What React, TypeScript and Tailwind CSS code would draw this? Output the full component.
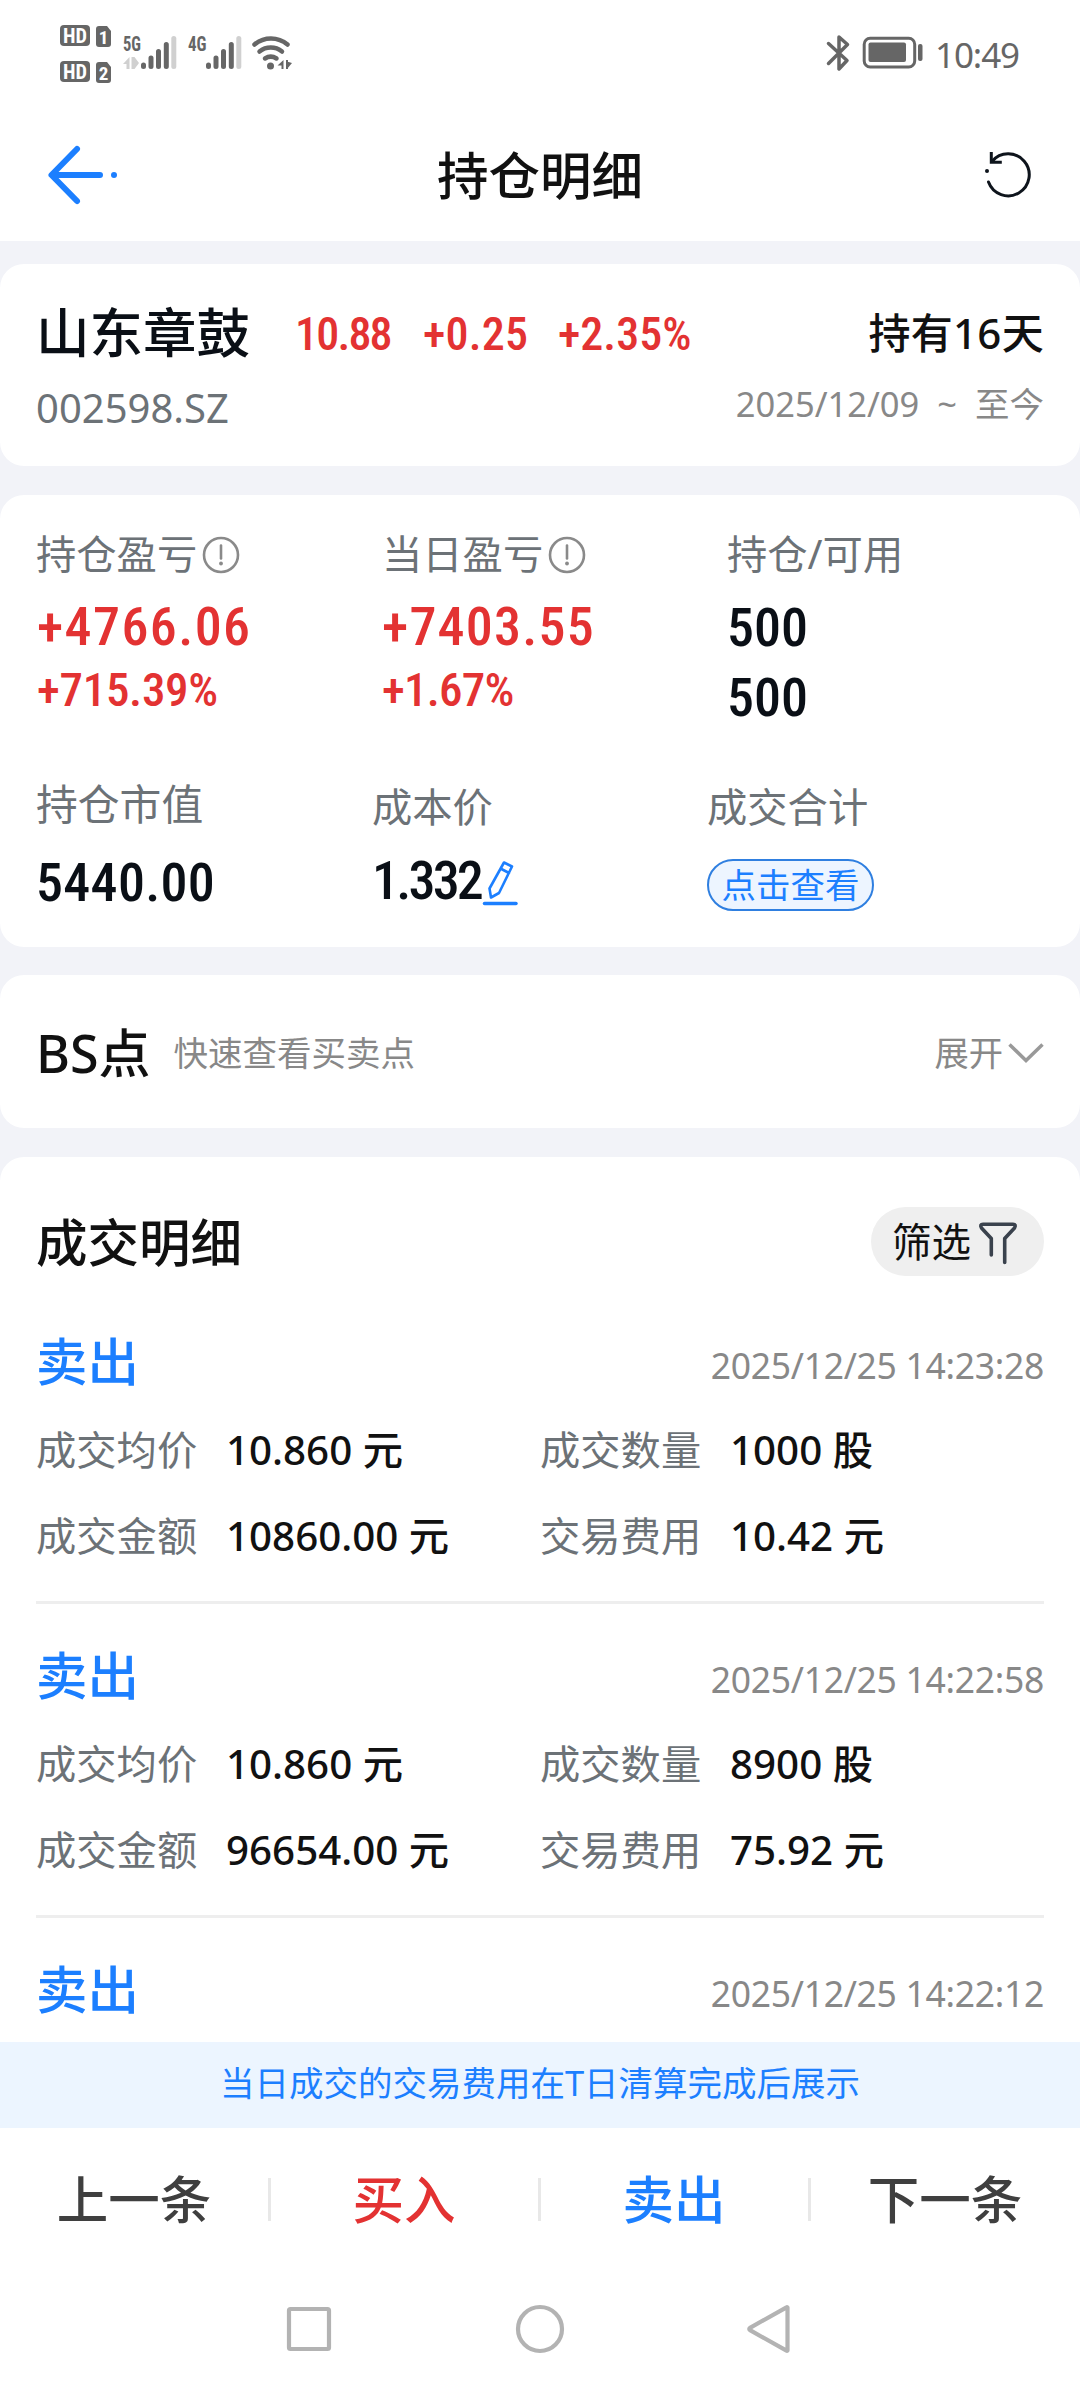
import type { ReactNode } from "react";

const trades = [
  {
    time: "2025/12/25 14:23:28",
    fields: [
      { label: "成交均价", value: "10.860 元" },
      { label: "成交数量", value: "1000 股" },
      { label: "成交金额", value: "10860.00 元" },
      { label: "交易费用", value: "10.42 元" },
    ],
  },
  {
    time: "2025/12/25 14:22:58",
    fields: [
      { label: "成交均价", value: "10.860 元" },
      { label: "成交数量", value: "8900 股" },
      { label: "成交金额", value: "96654.00 元" },
      { label: "交易费用", value: "75.92 元" },
    ],
  },
  { time: "2025/12/25 14:22:12", fields: [] },
];

const actions = [
  { label: "上一条", color: "text-[#3f3f3f]" },
  { label: "买入", color: "text-[#e33232]" },
  { label: "卖出", color: "text-[#1c7fff]" },
  { label: "下一条", color: "text-[#3f3f3f]" },
];

const din = "font-['Roboto_Condensed',Roboto,sans-serif] font-medium";

function StatusBar() {
  return (
    <div className="flex h-[110px] items-start justify-between pl-[60px] pr-[61px]">
      {/* sim cards, signal and wifi */}
      <svg className="mt-[20px]" width="234" height="70" viewBox="60 20 234 70" fill="#666">
        <rect x="60" y="25" width="30" height="21" rx="4" />
        <rect x="60" y="61" width="30" height="21" rx="4" />
        <path d="M99 26h8l4 5v13a3 3 0 0 1-3 3h-9a3 3 0 0 1-3-3V29a3 3 0 0 1 3-3z" />
        <path d="M99 62h8l4 5v13a3 3 0 0 1-3 3h-9a3 3 0 0 1-3-3V65a3 3 0 0 1 3-3z" />
        <g className="font-['Roboto_Condensed',Roboto,sans-serif] font-bold">
          <text x="75" y="43" fontSize="20.5" textAnchor="middle" fill="#fff" textLength="24" lengthAdjust="spacingAndGlyphs">HD</text>
          <text x="75" y="79" fontSize="20.5" textAnchor="middle" fill="#fff" textLength="24" lengthAdjust="spacingAndGlyphs">HD</text>
          <text x="103.5" y="43.5" fontSize="19" textAnchor="middle" fill="#fff">1</text>
          <text x="103.5" y="79.5" fontSize="19" textAnchor="middle" fill="#fff">2</text>
          <text x="123" y="51" fontSize="20.5" textLength="18" lengthAdjust="spacingAndGlyphs">5G</text>
          <text x="188" y="51" fontSize="20.5" textLength="18.5" lengthAdjust="spacingAndGlyphs">4G</text>
        </g>
        <path fill="#d0d0d0" d="M129.500 57v12h-3v-5h-3.500zM131.500 57h3v12h-3zM134.500 57v12l4.500-6z" />
        {[0, 65].map((dx) => (
          <g key={dx} stroke="#666" strokeWidth="5" strokeLinecap="round">
            <path d={`M${143.5 + dx} 65v1.500M${151 + dx} 58v8.500M${158.5 + dx} 51.500v15M${166.3 + dx} 44.500v22`} />
            <path stroke="#d0d0d0" d={`M${173.8 + dx} 38.500v28`} />
          </g>
        ))}
        <g fill="none" stroke="#666" strokeWidth="4.500" strokeLinecap="round">
          <path d="M254.500 44.500a25.500 25.500 0 0 1 33 0" />
          <path d="M259.500 51.500a18 18 0 0 1 22.500 0" />
          <path d="M265 58.500a10.500 10.500 0 0 1 11.500 0" />
        </g>
        <circle cx="270.500" cy="66" r="3.500" />
        <path d="M283.500 60v9h-2v-3.500h-4zM286 60v9h2v-9zM287 61.500v7.500l5-6z" />
      </svg>

      <div className="mt-[32px] flex h-[42px] items-center">
        <svg width="24" height="38" viewBox="826 34 24 38" fill="none" stroke="#666" strokeWidth="3.500" strokeLinejoin="round" strokeLinecap="round">
          <path d="M828.500 43.500 847 60.500l-8 8.500V37l8.500 7.500-19 19" />
        </svg>
        <svg className="ml-[12px]" width="62" height="34" viewBox="862 37 62 34">
          <rect x="864.200" y="39.200" width="50.500" height="28.800" rx="6" fill="none" stroke="#666" strokeWidth="3" />
          <rect x="868.500" y="43.500" width="37.500" height="19.500" rx="2" fill="#666" />
          <rect x="918" y="45" width="4.500" height="17" rx="2" fill="#666" />
        </svg>
        <span className="ml-[11px] mt-[2px] whitespace-nowrap text-[35px] leading-none tracking-[-1.1px] text-[#666]">10:49</span>
      </div>
    </div>
  );
}

function Header() {
  return (
    <header className="flex h-[131px] items-center justify-between px-[46px] pb-[2px]">
      <svg width="74" height="64" viewBox="46 143 74 64" fill="none" stroke="#1c7fff" strokeWidth="6" strokeLinecap="round" strokeLinejoin="round">
        <path d="M77 149 51.500 175 77 201M52 175h48" />
        <circle cx="114" cy="175" r="3" fill="#1c7fff" stroke="none" />
      </svg>
      <h1 className="pt-[2px] text-[51.5px] font-medium leading-none text-[#111]">持仓明细</h1>
      <svg className="ml-[24px]" width="50" height="50" viewBox="986 149 50 50" fill="none" stroke="#0e141c" strokeWidth="3" strokeLinecap="round">
        <path d="M990.500 181a21 21 0 1 0 3.500-20.500" />
        <path d="M993.300 152.500v8.700h9" strokeLinecap="square" />
        <circle cx="989" cy="170" r="2" fill="#0e141c" stroke="none" />
      </svg>
    </header>
  );
}

function InfoIcon() {
  return (
    <svg className="ml-[5px] mt-[2px]" width="38" height="38" viewBox="0 0 38 38" fill="none" stroke="#8a8a8a" strokeWidth="2.600">
      <circle cx="19" cy="19" r="17" />
      <path d="M19 9.500v13" strokeLinecap="round" />
      <circle cx="19" cy="27.500" r="1.900" fill="#8a8a8a" stroke="none" />
    </svg>
  );
}

function Card({ className, children }: { className: string; children: ReactNode }) {
  return <section className={`shrink-0 rounded-[24px] bg-white px-[36px] ${className}`}>{children}</section>;
}

function Label({ children }: { children: ReactNode }) {
  return <div className="flex h-[60px] items-center whitespace-nowrap text-[40.3px] leading-none text-[#6c7277]">{children}</div>;
}

function StockCard() {
  return (
    <Card className="mt-[23px] h-[202px] pt-[34px]">
      <div className="flex h-[70px] items-center leading-none">
        <span className="text-[53.5px] font-medium text-[#0a0f16]">山东章鼓</span>
        <div className={`ml-[45px] mt-[2px] flex flex-1 whitespace-pre text-[46px] text-[#e33232] ${din}`}>
          <span className="w-[128px] tracking-[-1.8px]">10.88</span>
          <span className="w-[135px] tracking-[0.2px]">+0.25</span>
          <span>+2.35%</span>
        </div>
        <span className="text-[42px] font-medium tracking-[0.3px] text-[#111]">持有16天</span>
      </div>
      <div className="mt-[5px] flex h-[70px] items-center justify-between leading-none">
        <span className="text-[40px] text-[#6c7277]">002598.SZ</span>
        <span className="mb-[7px] text-[34.5px] text-[#888]">
          2025/12/09<span className="mx-[18px]">~</span>至今
        </span>
      </div>
    </Card>
  );
}

function PositionCard() {
  return (
    <Card className="mt-[29px] h-[452px] pt-[29px]">
      <div className="grid h-[250px] grid-cols-[346px_345px_1fr]">
        <div>
          <Label>持仓盈亏<InfoIcon /></Label>
          <div className={`mt-[8px] flex h-[70px] items-center pl-px text-[54px] leading-none tracking-[1.4px] text-[#e33232] ${din}`}>+4766.06</div>
          <div className={`mt-[-2px] flex h-[58px] items-center pl-px text-[47px] leading-none tracking-[-0.3px] text-[#e33232] ${din}`}>+715.39%</div>
        </div>
        <div>
          <Label>当日盈亏<InfoIcon /></Label>
          <div className={`mt-[8px] flex h-[70px] items-center text-[54px] leading-none tracking-[1.2px] text-[#e33232] ${din}`}>+7403.55</div>
          <div className={`mt-[-2px] flex h-[58px] items-center text-[47px] leading-none tracking-[-0.8px] text-[#e33232] ${din}`}>+1.67%</div>
        </div>
        <div>
          <Label>持仓/可用</Label>
          <div className={`mt-[9px] flex h-[70px] items-center text-[54px] leading-none text-[#0a0f16] ${din}`}>500</div>
          <div className={`flex h-[70px] items-center text-[54px] leading-none text-[#0a0f16] ${din}`}>500</div>
        </div>
      </div>

      <div className="grid grid-cols-[336px_335px_1fr]">
        <div>
          <div className="flex h-[60px] items-center text-[41.8px] leading-none text-[#6c7277]">持仓市值</div>
          <div className={`mt-[17px] flex h-[64px] items-center text-[54px] leading-none tracking-[0.3px] text-[#0a0f16] ${din}`}>5440.00</div>
        </div>
        <div className="pt-[3px]">
          <Label>成本价</Label>
          <div className={`mt-[12px] flex h-[64px] items-center text-[54px] leading-none tracking-[-2.8px] text-[#0a0f16] ${din}`}>
            1.332
            <svg className="mt-[4px]" width="38" height="48" viewBox="482 858 38 48" fill="none" stroke="#1c7fff" strokeWidth="2.600" strokeLinejoin="round" strokeLinecap="round">
              <path d="M505 861.500 513 865.500 500 892 492 896.500 490.500 887.500zM501.500 867.500 510 872" />
              <path d="M485.500 902.500h31.500" strokeWidth="3.500" />
            </svg>
          </div>
        </div>
        <div className="pt-[3px]">
          <Label>成交合计</Label>
          <button className="mt-[22px] flex h-[52px] w-[167px] items-center justify-center rounded-full border-2 border-[#2f7fe0] bg-[#edf5ff] text-[34.5px] leading-none text-[#1c7fff]">
            点击查看
          </button>
        </div>
      </div>
    </Card>
  );
}

function BsCard() {
  return (
    <Card className="mt-[28px] flex h-[153px] items-center pt-[3px] leading-none">
      <span className="text-[52px] font-medium text-[#111]">BS点</span>
      <span className="ml-[23px] flex-1 text-[34.5px] text-[#888]">快速查看买卖点</span>
      <span className="text-[34.3px] text-[#888]">展开</span>
      <svg className="ml-[5px]" width="36" height="22" viewBox="0 0 36 22" fill="none" stroke="#999" strokeWidth="3.500">
        <path d="M1.500 2.500 18 18.500 34.500 2.500" />
      </svg>
    </Card>
  );
}

function Field({ label, value }: { label: string; value: string }) {
  return (
    <div className="flex h-[86px] w-1/2 items-center whitespace-nowrap text-[40.3px] leading-none">
      <span className="w-[190px] text-[#6c7277]">{label}</span>
      <span className="font-medium text-[#111]">{value}</span>
    </div>
  );
}

function TradeList() {
  return (
    <section className="mt-[29px] min-h-0 flex-1 overflow-hidden rounded-t-[24px] bg-white px-[36px] pt-[50px]">
      <div className="flex h-[69px] items-center justify-between leading-none">
        <h2 className="pt-[3px] text-[51.5px] font-medium text-[#111]">成交明细</h2>
        <button className="flex h-[69px] w-[173px] items-center rounded-full bg-[#efefef] pl-[21px] pt-[2px] text-[39.5px] text-[#111]">
          筛选
          <svg className="ml-[7px]" width="40" height="46" viewBox="978 1220 40 46" fill="none" stroke="#3a424d" strokeWidth="3.600" strokeLinecap="round" strokeLinejoin="round">
            <path d="M991.300 1255V1238.500L981.500 1228Q979.500 1224.300 983 1224.300H1013Q1016.500 1224.300 1014.500 1228L1004.700 1238.500V1262.500" />
          </svg>
        </button>
      </div>
      <div className="pt-[40px]">
        {trades.map((t) => (
          <div key={t.time}>
            <div className="flex h-[91px] items-center justify-between leading-none">
              <span className="text-[51.5px] font-medium text-[#1c7fff]">卖出</span>
              <span className="mt-[8px] text-[35.5px] tracking-[-0.3px] text-[#888]">{t.time}</span>
            </div>
            {t.fields.length > 0 && (
              <>
                <div className="flex flex-wrap">
                  {t.fields.map((f) => (
                    <Field key={f.label} label={f.label} value={f.value} />
                  ))}
                </div>
                <div className="mb-[26px] mt-[22px] h-[3px] bg-[#eee]" />
              </>
            )}
          </div>
        ))}
      </div>
    </section>
  );
}

function BottomBar() {
  return (
    <div className="flex h-[144px] shrink-0 bg-white">
      {actions.map((a, i) => (
        <div key={a.label} className="flex flex-1 items-center">
          <button className={`flex-1 text-center text-[51.5px] font-medium leading-none ${a.color}`}>{a.label}</button>
          {i < 3 && <div className="-mr-px mt-[-2px] h-[43px] w-[3px] bg-[#e8e8e8]" />}
        </div>
      ))}
    </div>
  );
}

function SystemNav() {
  return (
    <div className="flex h-[116px] shrink-0 justify-center bg-white pt-[30px]">
      <svg width="510" height="54" viewBox="285 2302 510 54" fill="none" stroke="#b3b3b3" strokeWidth="4.200" strokeLinejoin="round">
        <rect x="289" y="2309" width="40" height="40" rx="1.500" />
        <circle cx="540" cy="2329" r="22" />
        <path d="M787.500 2307.500v43q-.5.500-1 .2L750 2330.200q-1.500-1.200 0-2.400L786.500 2307.300q.5-.3 1 .2z" />
      </svg>
    </div>
  );
}

export default function App() {
  return (
    <div className="flex h-[2388px] w-[1080px] flex-col overflow-hidden bg-[#f2f3f8] font-['Noto_Sans','Noto_Sans_CJK_SC',sans-serif]">
      <div className="shrink-0 bg-white">
        <StatusBar />
        <Header />
      </div>
      <StockCard />
      <PositionCard />
      <BsCard />
      <TradeList />
      <div className="flex h-[86px] shrink-0 items-center justify-center bg-[#ecf5ff] pb-[3px] text-[34.5px] leading-none text-[#1c7fff]">
        当日成交的交易费用在T日清算完成后展示
      </div>
      <BottomBar />
      <SystemNav />
    </div>
  );
}
